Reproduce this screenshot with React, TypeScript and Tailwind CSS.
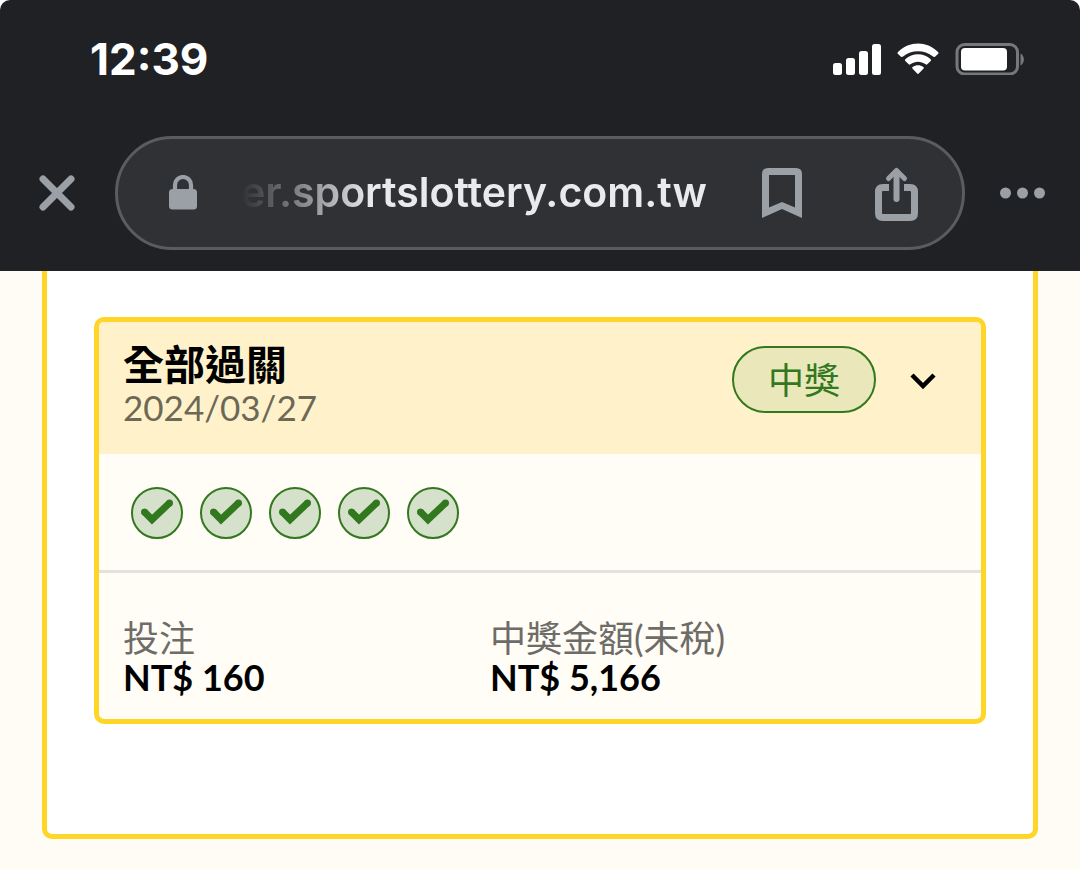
const legs = [1, 2, 3, 4, 5]

const stats = [
  { label: '投注', value: 'NT$ 160' },
  { label: '中獎金額(未稅)', value: 'NT$ 5,166' },
]

function StatusBar() {
  return (
    <div className="flex h-[118px] items-center justify-between pl-[90px] pr-[55px] text-white">
      <time className="text-[44px] font-bold leading-[52px]">12:39</time>
      <div className="flex items-center gap-4">
        <svg className="h-8 w-12" viewBox="0 0 48 32" fill="currentColor" aria-hidden="true">
          <rect x="0" y="20" width="9" height="12" rx="2.5" />
          <rect x="13" y="15" width="9" height="17" rx="2.5" />
          <rect x="26" y="8" width="9" height="24" rx="2.5" />
          <rect x="39" y="1" width="9" height="31" rx="2.5" />
        </svg>
        <svg className="h-8 w-[42px]" viewBox="0 0 42 32" fill="currentColor" aria-hidden="true">
          <path d="M1 9C12.5-2.300 29.500-2.300 41 9Q42 10 41 11L38 13.700Q37 14.400 36 13.600C27.500 6.300 14.500 6.300 6 13.600Q5 14.400 4 13.700L1 11Q0 10 1 9Z" />
          <path d="M8.300 16.200C15.500 9.500 26.500 9.500 33.700 16.200Q34.500 17.100 33.700 18L30.300 21.300Q29.500 22 28.600 21.300C24 17.800 18 17.800 13.400 21.300Q12.500 22 11.700 21.300L8.300 18Q7.500 17.100 8.300 16.200Z" />
          <path d="M15.600 24C19 21.700 23 21.700 26.400 24Q27.300 24.800 26.400 25.800L21.800 30.600Q21 31.400 20.200 30.600L15.600 25.800Q14.700 24.800 15.600 24Z" />
        </svg>
        <svg className="h-8 w-[70px]" viewBox="0 0 70 32" aria-hidden="true">
          <rect x="2" y="1.500" width="60.500" height="29.500" rx="7.500" fill="none" stroke="#77787b" strokeWidth="3" />
          <rect x="6" y="5" width="46" height="22.500" rx="4" fill="currentColor" />
          <path d="M65.500 10.500C70 12.500 70 20.500 65.500 22.500Z" fill="#77787b" />
        </svg>
      </div>
    </div>
  )
}

function AddressBar() {
  return (
    <div className="flex items-center px-[35px] pb-[21px] pt-[18px] text-[#9aa0a6]">
      <button type="button" aria-label="Close" className="mr-9 flex h-11 w-11 items-center justify-center">
        <svg className="h-9 w-9" viewBox="0 0 36 36" stroke="currentColor" strokeWidth="7" strokeLinecap="round" aria-hidden="true">
          <path d="M4 4L32 32M32 4L4 32" />
        </svg>
      </button>

      <div className="flex h-[114px] min-w-0 flex-1 items-center rounded-full border-[3px] border-[#5b5c60] bg-[#303134] pl-[51px] pr-[44px]">
        <svg className="h-9 w-7 shrink-0" viewBox="0 0 28 36" aria-hidden="true">
          <rect x="0" y="14" width="28" height="20.500" rx="3.500" fill="currentColor" />
          <path d="M6 16V10a8 8 0 0 1 16 0v6" fill="none" stroke="currentColor" strokeWidth="4.200" />
        </svg>
        <input
          type="text"
          readOnly
          aria-label="Address"
          defaultValue="er.sportslottery.com.tw"
          className="ml-11 h-14 min-w-0 flex-1 bg-transparent text-[41px] font-semibold text-[#e8eaed] outline-none [mask-image:linear-gradient(to_right,transparent,black_130px)]"
        />
        <button type="button" aria-label="Bookmark" className="ml-6 shrink-0">
          <svg className="h-[54px] w-10" viewBox="0 0 40 54" fill="currentColor" aria-hidden="true">
            <path fillRule="evenodd" d="M6 2H34Q40 2 40 8V52L20 43L0 52V8Q0 2 6 2ZM7 9V41.500L20 36L33 41.500V9Z" />
          </svg>
        </button>
        <button type="button" aria-label="Share" className="ml-[73px] shrink-0">
          <svg className="h-[56px] w-[43px]" viewBox="0 0 43 56" fill="none" stroke="currentColor" aria-hidden="true">
            <path d="M14 22.500H8Q3.500 22.500 3.500 27V48Q3.500 52.500 8 52.500H35Q39.500 52.500 39.500 48V27Q39.500 22.500 35 22.500H29" strokeWidth="7" />
            <path d="M21.500 7V34" strokeWidth="6" strokeLinecap="round" />
            <path d="M13.500 13.500L21.500 5.500L29.500 13.500" strokeWidth="5" strokeLinecap="round" strokeLinejoin="round" />
          </svg>
        </button>
      </div>

      <button type="button" aria-label="More" className="ml-[35px]">
        <svg className="h-11 w-[45px]" viewBox="0 0 45 44" fill="currentColor" aria-hidden="true">
          <circle cx="5.500" cy="22" r="5.500" />
          <circle cx="22.500" cy="22" r="5.500" />
          <circle cx="39.500" cy="22" r="5.500" />
        </svg>
      </button>
    </div>
  )
}

function CheckMark() {
  return (
    <li className="flex h-[52px] w-[52px] items-center justify-center rounded-full border-2 border-[#32781f] bg-[#d6e1cb]">
      <svg className="h-9 w-9" viewBox="0 0 36 36" fill="none" stroke="#32781f" strokeWidth="7" aria-hidden="true">
        <path d="M5.500 17L13 24.500L30.500 8" />
        <g fill="#32781f" stroke="none">
          <circle cx="5.500" cy="17" r="3.500" />
          <circle cx="30.500" cy="8" r="3.500" />
        </g>
      </svg>
    </li>
  )
}

function TicketCard() {
  return (
    <article className="overflow-hidden rounded-[10px] border-[5px] border-[#ffd628] bg-[#fffdf5]">
      <header className="flex items-start bg-[#fff2cb] pb-[26px] pl-6 pr-[44px] pt-[22px]">
        <div className="flex-1">
          <h2 className="text-[41px] font-bold leading-[42px] text-black">全部過關</h2>
          <time className="block text-[35px] leading-[42px] text-[#6d6856]">2024/03/27</time>
        </div>
        <span className="mt-0.5 rounded-full border-2 border-[#32781f] bg-[#eae7ba] px-[34px] pt-0.5 text-[36px] leading-[61px] text-[#32781f]">
          中獎
        </span>
        <button type="button" aria-label="Expand" className="ml-[33px] mt-[22px] text-black">
          <svg className="h-8 w-7" viewBox="0 0 28 32" fill="none" stroke="currentColor" strokeWidth="4.500" aria-hidden="true">
            <path d="M3 9L14 20L25 9" />
          </svg>
        </button>
      </header>

      <ul className="flex gap-[17px] border-b-[3px] border-[#e4e2dc] px-8 pb-[31px] pt-[33px]">
        {legs.map((leg) => (
          <CheckMark key={leg} />
        ))}
      </ul>

      <dl className="grid grid-cols-[11fr_14fr] px-6 pb-[23px] pt-[45px]">
        {stats.map((stat) => (
          <div key={stat.label}>
            <dt className="text-[36px] leading-[40px] text-[#6e6c69]">{stat.label}</dt>
            <dd className="text-[36px] font-bold leading-[38px] text-black">{stat.value}</dd>
          </div>
        ))}
      </dl>
    </article>
  )
}

export default function App() {
  return (
    <div className="min-h-screen bg-[#fffcf5]">
      <div className="bg-white">
        <header className="rounded-t-[10px] bg-[#202124] font-['Inter',sans-serif]">
          <StatusBar />
          <AddressBar />
        </header>
      </div>
      <main className="px-[42px] pb-8 font-['Lato','Noto_Sans_CJK_TC',sans-serif]">
        <section className="rounded-b-[10px] border-x-[5px] border-b-[5px] border-[#ffd628] bg-white px-[47px] pb-[110px] pt-[46px]">
          <TicketCard />
        </section>
      </main>
    </div>
  )
}
